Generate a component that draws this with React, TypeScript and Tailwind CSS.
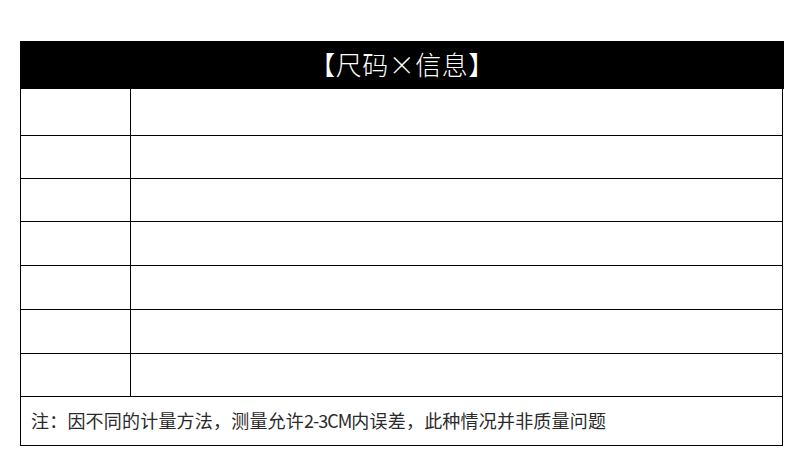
const rowHeights = [47, 43, 43, 44, 44, 44, 43];

const SizeTable = () => {
  return (
    <div className="ml-[20px] mt-[41px] w-[764px]">
      {/* header */}
      <div className="h-[48px] bg-black flex items-center justify-center text-white text-[26px] leading-none tracking-[0.5px] pb-[2px] font-light font-['Noto_Sans_CJK_SC','Noto_Sans_CJK_JP',sans-serif]">
        【尺码×信息】
      </div>

      <div className="w-[763px] border-l border-r border-black">
        {rowHeights.map((h, index) => (
          <div
            key={`row-${index}`}
            className="flex border-b border-black box-border"
            style={{ height: h }}
          >
            <div className="w-[110px] border-r border-black"></div>
            <div className="flex-1"></div>
          </div>
        ))}

        {/* note */}
        <div className="h-[49px] border-b border-black flex items-center pl-[10px] pb-[1px] text-[18px] tracking-[0.2px] text-[#2a2a2a] font-['Noto_Sans_CJK_SC',sans-serif]">
          注：因不同的计量方法，测量允许<span className="tracking-[-1px]">2-3CM</span>内误差，此种情况并非质量问题
        </div>
      </div>
    </div>
  );
};

export default function App() {
  return (
    <div className="w-[800px] h-[471px] bg-white overflow-hidden">
      <SizeTable />
    </div>
  );
}
